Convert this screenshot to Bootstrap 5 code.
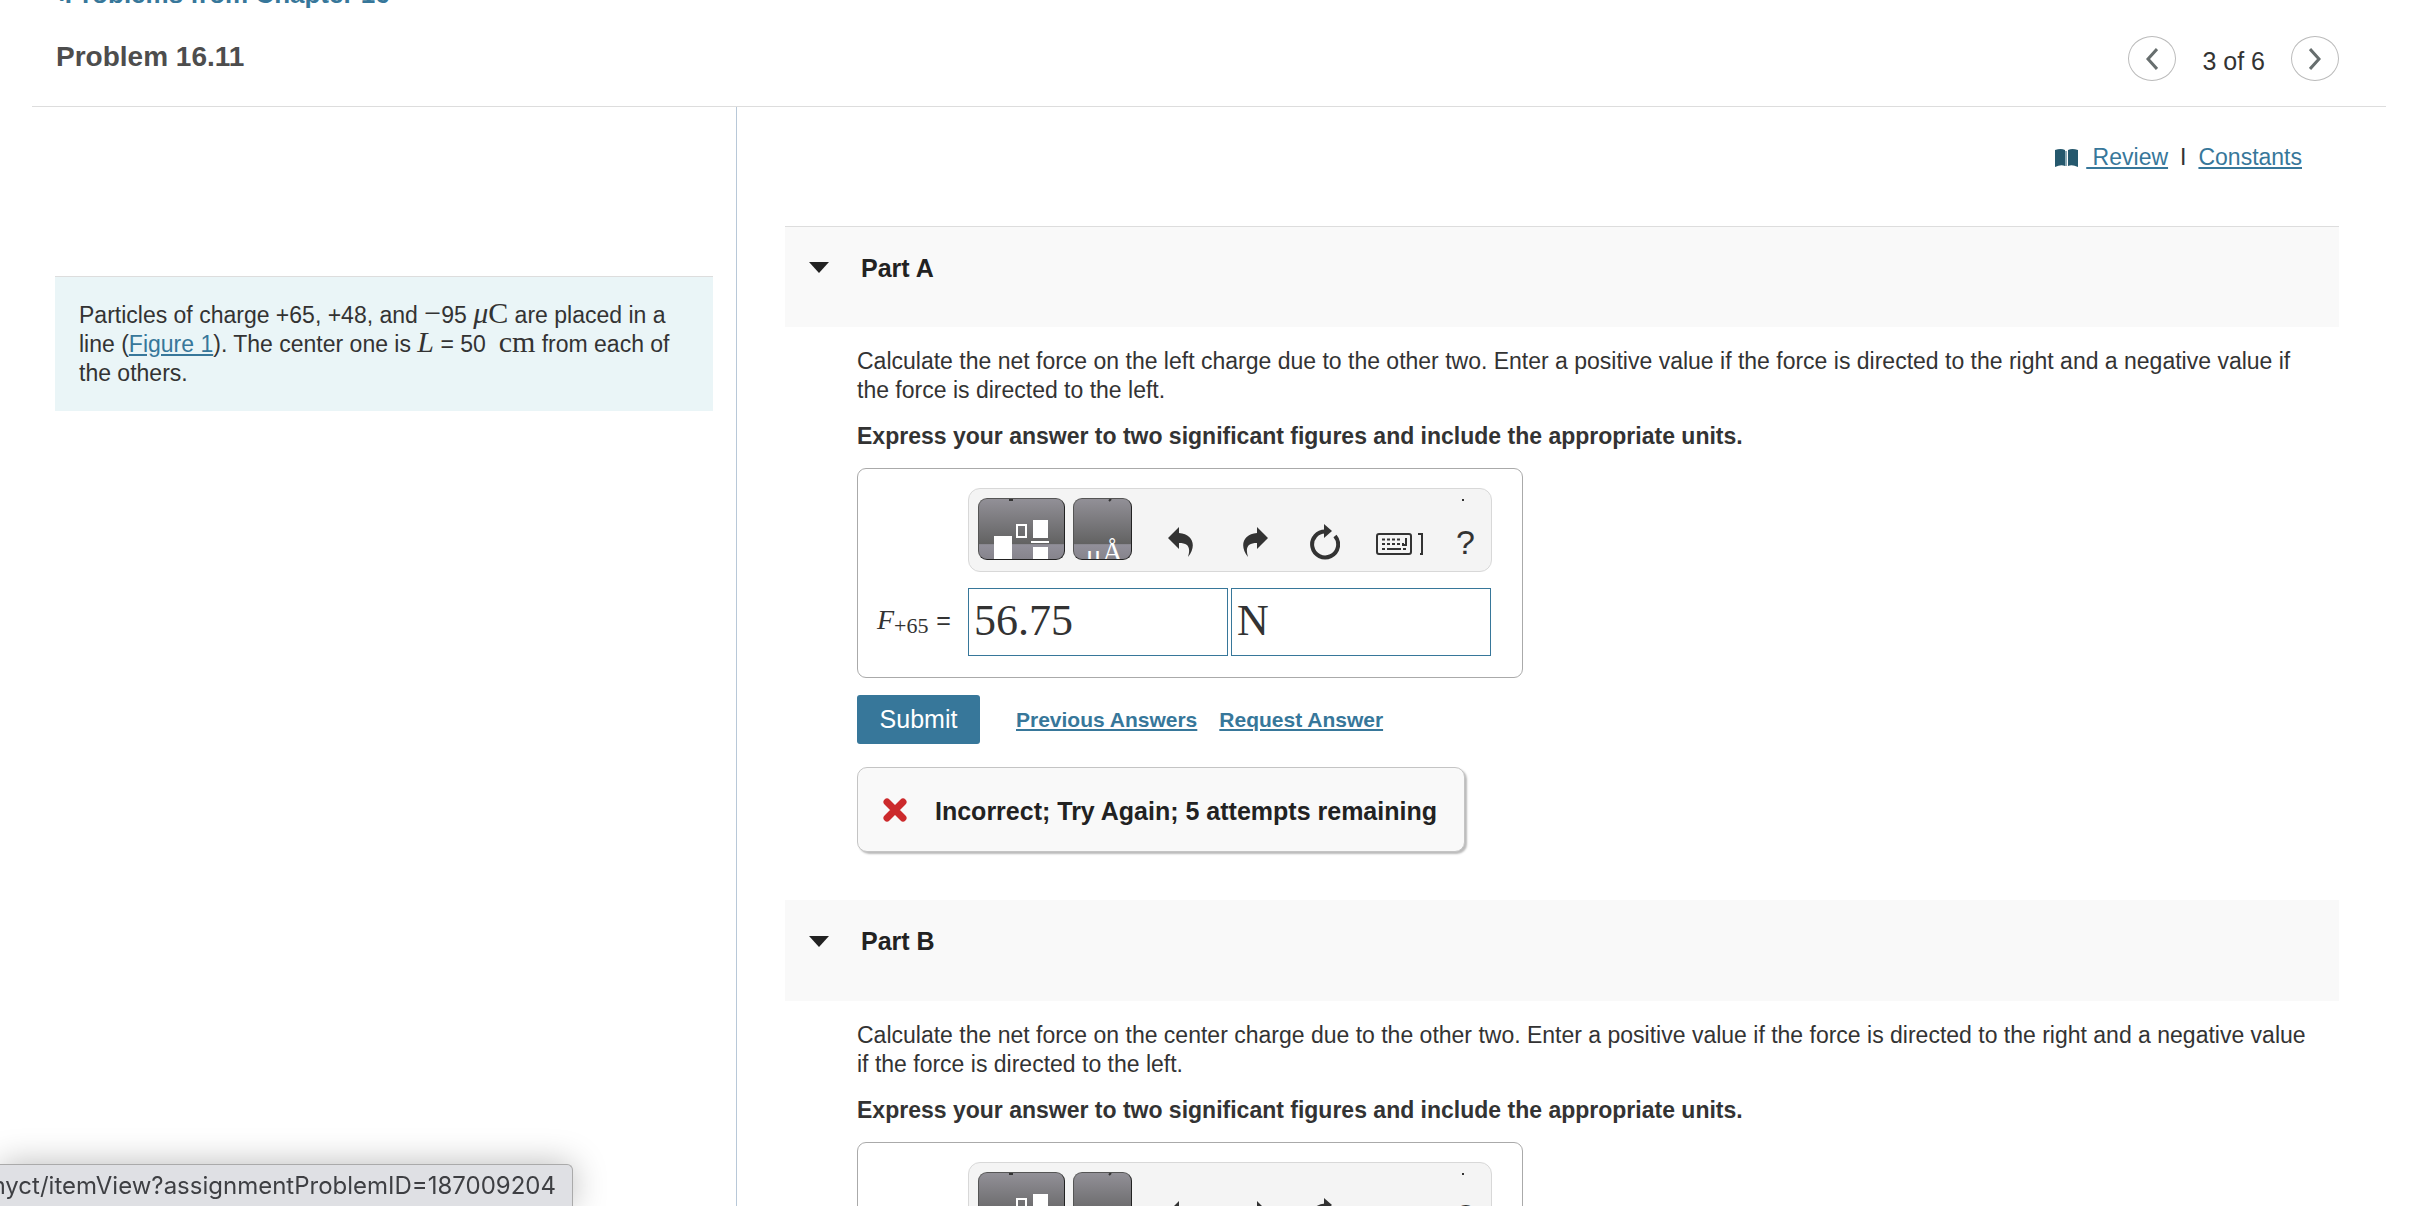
<!DOCTYPE html>
<html lang="en">
<head>
<meta charset="utf-8">
<meta name="viewport" content="width=device-width, initial-scale=1">
<title>Problem 16.11</title>
<link href="https://cdn.jsdelivr.net/npm/bootstrap@5.3.0/dist/css/bootstrap.min.css" rel="stylesheet">
<style>
:root{--ink:#333;--link:#37779a;--rule:#ddd}
body{font-family:"Liberation Sans",Arial,sans-serif;font-size:23px;line-height:29px;color:var(--ink);background:#fff}
a{color:var(--link)}
.math{font-family:"Liberation Serif","Times New Roman",serif}
.topbar{margin:0 24px 0 32px;padding:0 47px 25px 24px;border-bottom:1px solid var(--rule)}
.crumb{margin-top:-20px;margin-bottom:28px;font-size:26px;line-height:28px}
.prob-title{font-size:28px;line-height:34px;color:#4d4d4d}
.pager{font-size:25px;line-height:30px;gap:26px}
.pager button{width:48px;height:45px;border:1px solid #bbb;border-radius:50%;background:#fff}
.left-col{flex:0 0 31%;max-width:737px;border-right:1px solid #b8c8d8;padding:169px 23px 0 55px}
.intro{background:#eaf5f7;border-top:1px solid var(--rule);padding:24px 16px 23px 24px}
.intro .math{font-size:30px;line-height:20px}
.right-col{padding:36px 71px 0 48px}
.helplinks{padding-right:37px;margin-bottom:54px}
.part-head{background:#f9f9f9;padding:26px 24px 45px;gap:32px;font-size:25px;line-height:30px;color:#222;height:101px}
.part-head.first{border-top:1px solid var(--rule)}
.part-body{padding:20px 24px 0 72px}
.part-body p{margin-bottom:17px}
.answer-box{width:666px;border:1px solid #aaa;border-radius:9px;padding:19px 30px 21px 19px}
.answer-label{width:91px;height:67px;font-size:28px;padding-bottom:5px}
.answer-label sub{font-size:22px;bottom:-4px}
.answer-label b{font-size:25px;font-weight:400}
.tools{background:#f4f4f4;border:1px solid #d8d8d8;border-radius:12px;padding:9px 12px 12px 9px;margin-bottom:16px;height:84px}
.tool-dark{height:62px;border:1px solid #555;border-right-color:#222;border-bottom-color:#222;border-radius:9px;background:linear-gradient(#929097 0,#626262 75%,#92909a 76%,#86848c 100%);overflow:hidden}
.tool-dark.wide{width:87px;margin-right:8px}
.tool-dark.narrow{width:59px}
.tool-plain{border:0;background:none;color:var(--ink)}
.tool-set{gap:32px;padding-top:27px}
.help-mark{font-size:34px;line-height:32px}
.speck{width:2px;height:2px;background:#333;top:10px;right:27px}
.fields{gap:3px}
.field{width:260px;height:68px;border:1px solid var(--link);padding:0 5px 3px;font-size:44px;color:var(--ink);border-radius:0}
.submit-btn{background:var(--link);color:#fff;font-size:25px;line-height:31px;border-radius:3px;padding:9px 22px;width:123px;border:0}
.links-row{font-size:21px;gap:36px;margin-top:17px}
.link-pair{gap:22px}
.feedback-box{width:608px;height:85px;background:#f9f9f9;border:1px solid #c4c4c4;border-radius:10px;box-shadow:2px 2px 2px #bbb;padding:0 25px;gap:28px;font-size:25px;color:#222;margin-top:23px;margin-bottom:48px}
.statusbar{width:573px;height:42px;background:#dfe0e4;border:1px solid #aaa;border-left:0;border-bottom:0;border-top-right-radius:6px;box-shadow:0 0 34px rgba(0,0,0,.28);color:#3e3f43;font-family:Inter,sans-serif;font-size:24px;padding-right:16px}
svg{display:block}
</style>
</head>
<body class="vh-100 overflow-hidden d-flex flex-column">
<svg class="d-none" aria-hidden="true">
<symbol id="i-templates" viewBox="0 0 87 61"><path d="M30 0h4v2h-4z" fill="#333"/><path d="M15 37h18v24H15zM54 21h15v18H54zM52 42h18v2H52zM54 48h15v13H54z" fill="#fff"/><path d="M38 26h9v12h-9z" fill="none" stroke="#fff" stroke-width="2"/></symbol>
<symbol id="i-units" viewBox="0 0 59 61"><path d="M35 2l2-2" stroke="#333" stroke-width="2"/><text x="12" y="66" fill="#fff" font-family="Liberation Serif,serif" font-size="29">μ</text><text x="28" y="63" fill="#fff" font-family="Liberation Serif,serif" font-size="29">Å</text></symbol>
<symbol id="i-undo" viewBox="0 0 26 30"><path d="M0 11L11 0v6C25 7 29 19 20 30C23 20 20 16 11 16v6z" fill="#333"/></symbol>
<symbol id="i-redo" viewBox="0 0 26 30"><path d="M26 11L15 0v6C1 7-3 19 6 30C3 20 6 16 15 16v6z" fill="#333"/></symbol>
<symbol id="i-reset" viewBox="0 0 32 36"><path d="M18 7.500A13 13 0 1 0 27 12" fill="none" stroke="#333" stroke-width="4"/><path d="M16 0l8 7l-8 7z" fill="#333"/></symbol>
<symbol id="i-keys" viewBox="0 0 48 22"><rect x="1" y="1" width="34" height="20" rx="2" fill="none" stroke="#333" stroke-width="2"/><path d="M6 6.500h20M6 11h22" stroke="#333" stroke-width="2" stroke-dasharray="3 2"/><path d="M30 5v7h-4M6 16h3M11 16h14M27 16h3" fill="none" stroke="#333" stroke-width="2"/><path d="M42 1h4v20h-2" fill="none" stroke="#333" stroke-width="2"/></symbol>
</svg>

<header class="topbar flex-shrink-0">
  <div class="crumb"><a class="fw-bold text-decoration-none" href="#">‹Problems from Chapter 16</a></div>
  <div class="d-flex justify-content-between">
    <h1 class="prob-title fw-bold mb-0 mt-1">Problem 16.11</h1>
    <nav class="pager d-flex align-items-center" aria-label="Problem">
      <button type="button" class="p-0 d-flex align-items-center justify-content-center" aria-label="Previous"><svg width="12" height="22" viewBox="0 0 12 22"><path d="M11 1L2 11l9 10" fill="none" stroke="#676e6e" stroke-width="3"/></svg></button>
      <span class="pt-1">3 of 6</span>
      <button type="button" class="p-0 d-flex align-items-center justify-content-center" aria-label="Next"><svg width="12" height="22" viewBox="0 0 12 22"><path d="M1 1l9 10L1 21" fill="none" stroke="#676e6e" stroke-width="3"/></svg></button>
    </nav>
  </div>
</header>

<div class="d-flex flex-grow-1">
  <aside class="left-col">
    <p class="intro mb-0">Particles of charge +65, +48, and <span class="math">−</span>95 <span class="math"><i>μ</i>C</span> are placed in a line (<a href="#">Figure 1</a>). The center one is <i class="math">L</i> = 50 &nbsp;<span class="math">cm</span> from each of the others.</p>
  </aside>
  <main class="right-col flex-grow-1">
    <div class="helplinks d-flex justify-content-end align-items-center">
      <svg width="23" height="18" viewBox="0 0 23 18" class="me-2"><path d="M0 1Q6-1 10 1v16Q6 15 0 18zM13 1Q17-1 23 1v17Q17 15 13 17z" fill="#25586d"/><path d="M11 2v15" stroke="#8eabb7" stroke-width="2"/></svg>
      <a href="#">&nbsp;Review</a><span class="mx-2 px-1">I</span><a href="#">Constants</a>
    </div>

    <section>
      <h2 class="part-head first d-flex align-items-center fw-bold mb-0"><svg width="20" height="11" viewBox="0 0 20 11"><path d="M0 0h20L10 11z" fill="#222"/></svg>Part A</h2>
      <div class="part-body">
        <p>Calculate the net force on the left charge due to the other two. Enter a positive value if the force is directed to the right and a negative value if the force is directed to the left.</p>
        <p class="fw-bold">Express your answer to two significant figures and include the appropriate units.</p>
        <form>
          <div class="answer-box d-flex align-items-end">
            <label for="valA" class="answer-label d-flex align-items-center"><span><i class="math">F</i><sub class="math">+65</sub> <b>=</b></span></label>
            <div class="flex-grow-1">
              <div class="tools d-flex position-relative">
                <button type="button" class="tool-dark wide p-0" aria-label="Templates"><svg width="87" height="61"><use href="#i-templates"/></svg></button>
                <button type="button" class="tool-dark narrow p-0" aria-label="Units"><svg width="59" height="61"><use href="#i-units"/></svg></button>
                <div class="tool-set d-flex flex-grow-1 justify-content-end align-items-center pe-1">
                  <button type="button" class="tool-plain p-0 me-3" aria-label="Undo"><svg width="26" height="30"><use href="#i-undo"/></svg></button>
                  <button type="button" class="tool-plain p-0 me-2" aria-label="Redo"><svg width="26" height="30"><use href="#i-redo"/></svg></button>
                  <button type="button" class="tool-plain p-0 me-1" aria-label="Reset"><svg width="32" height="36"><use href="#i-reset"/></svg></button>
                  <button type="button" class="tool-plain p-0 mt-1" aria-label="Keyboard"><svg width="48" height="22"><use href="#i-keys"/></svg></button>
                  <button type="button" class="tool-plain help-mark p-0" aria-label="Help">?</button>
                </div>
                <span class="speck position-absolute"></span>
              </div>
              <div class="fields d-flex">
                <input id="valA" class="field math" value="56.75">
                <input class="field math" value="N" aria-label="Units">
              </div>
            </div>
          </div>
          <div class="links-row d-flex align-items-center">
            <button type="submit" class="submit-btn">Submit</button>
            <div class="link-pair d-flex">
              <a class="fw-bold" href="#">Previous Answers</a>
              <a class="fw-bold" href="#">Request Answer</a>
            </div>
          </div>
        </form>
        <div class="feedback-box d-flex align-items-center fw-bold" role="status"><svg width="24" height="24" viewBox="0 0 24 24"><path d="M4 4l16 16M20 4L4 20" stroke="#cc2a2c" stroke-width="7" stroke-linecap="round"/></svg><span class="pt-1">Incorrect; Try Again; 5 attempts remaining</span></div>
      </div>
    </section>

    <section>
      <h2 class="part-head d-flex align-items-center fw-bold mb-0"><svg width="20" height="11" viewBox="0 0 20 11"><path d="M0 0h20L10 11z" fill="#222"/></svg>Part B</h2>
      <div class="part-body">
        <p>Calculate the net force on the center charge due to the other two. Enter a positive value if the force is directed to the right and a negative value if the force is directed to the left.</p>
        <p class="fw-bold">Express your answer to two significant figures and include the appropriate units.</p>
        <form>
          <div class="answer-box d-flex align-items-end">
            <div class="answer-label"></div>
            <div class="flex-grow-1">
              <div class="tools d-flex position-relative">
                <button type="button" class="tool-dark wide p-0" aria-label="Templates"><svg width="87" height="61"><use href="#i-templates"/></svg></button>
                <button type="button" class="tool-dark narrow p-0" aria-label="Units"><svg width="59" height="61"><use href="#i-units"/></svg></button>
                <div class="tool-set d-flex flex-grow-1 justify-content-end align-items-center pe-1">
                  <button type="button" class="tool-plain p-0 me-3" aria-label="Undo"><svg width="26" height="30"><use href="#i-undo"/></svg></button>
                  <button type="button" class="tool-plain p-0 me-2" aria-label="Redo"><svg width="26" height="30"><use href="#i-redo"/></svg></button>
                  <button type="button" class="tool-plain p-0 me-1" aria-label="Reset"><svg width="32" height="36"><use href="#i-reset"/></svg></button>
                  <button type="button" class="tool-plain p-0 mt-1" aria-label="Keyboard"><svg width="48" height="22"><use href="#i-keys"/></svg></button>
                  <button type="button" class="tool-plain help-mark p-0" aria-label="Help">?</button>
                </div>
                <span class="speck position-absolute"></span>
              </div>
            </div>
          </div>
        </form>
      </div>
    </section>
  </main>
</div>

<div class="statusbar position-fixed bottom-0 start-0 d-flex justify-content-end align-items-center overflow-hidden text-nowrap">myct/itemView?assignmentProblemID=187009204</div>
<script src="https://cdn.jsdelivr.net/npm/bootstrap@5.3.0/dist/js/bootstrap.bundle.min.js"></script>
</body>
</html>
